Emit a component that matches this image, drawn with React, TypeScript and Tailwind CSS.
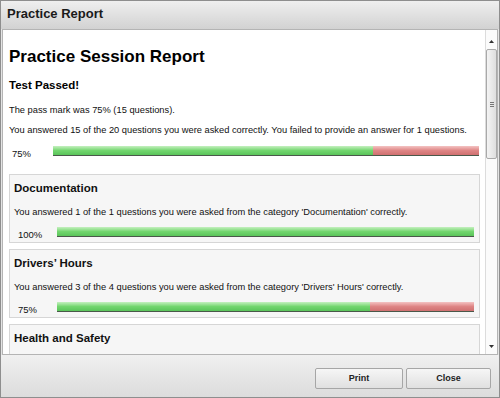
import React from "react";

interface Category {
  name: string;
  correct: number;
  asked: number;
}

const CATEGORIES: Category[] = [
  { name: "Documentation", correct: 1, asked: 1 },
  { name: "Drivers\u2019 Hours", correct: 3, asked: 4 },
];

const FONT = { fontFamily: '"Liberation Sans", Arial, sans-serif' };

function ScoreBar({ percent }: { percent: number }) {
  return (
    <div className="flex-1 h-[10px] mb-[3px] flex border-b border-[#4a584a]">
      <div
        className="h-full bg-gradient-to-b from-[#c4f0bf] via-[#72d66e] to-[#5ac45a]"
        style={{ width: `${percent}%` }}
      />
      {percent < 100 && (
        <div className="flex-1 h-full bg-gradient-to-b from-[#f3c3c3] via-[#de8585] to-[#cf7070]" />
      )}
    </div>
  );
}

function ScoreRow({ percent, labelClass }: { percent: number; labelClass: string }) {
  return (
    <div className="flex items-end">
      <div className={`text-[9.5px] leading-[10px] text-[#111] ${labelClass}`}>{percent}%</div>
      <ScoreBar percent={percent} />
    </div>
  );
}

function CategoryBox({ cat }: { cat: Category }) {
  const pct = Math.round((cat.correct / cat.asked) * 100);
  return (
    <div className="border border-[#d6d6d6] bg-[#f6f6f6] pl-[4px] pr-[5px] pt-[5px] pb-[2px]">
      <div className="text-[11.5px] leading-[16px] font-bold text-[#111]">{cat.name}</div>
      <div className="mt-[10px] text-[9.3px] leading-[12px] text-[#111]">
        You answered {cat.correct} of the {cat.asked} questions you were asked from the category '
        {cat.name.replace("\u2019", "'")}' correctly.
      </div>
      <div className="mt-[9px]">
        <ScoreRow percent={pct} labelClass="w-[43px] pl-[4px]" />
      </div>
    </div>
  );
}

function Scrollbar() {
  return (
    <div className="w-[12px] border-l border-[#dcdcdc] bg-[#fbfbfb] flex flex-col items-center">
      <div className="h-[19px] flex items-center justify-center pt-[4px]">
        <svg width="5" height="3" viewBox="0 0 5 3">
          <path d="M0 3 L2.5 0 L5 3 Z" fill="#333" />
        </svg>
      </div>
      <div className="w-[11px] h-[110px] rounded-[2px] border border-[#a9a9a9] bg-gradient-to-r from-[#f4f4f4] to-[#dedede] flex items-center justify-center">
        <div className="flex flex-col gap-[1px]">
          <div className="w-[4px] h-px bg-[#777]" />
          <div className="w-[4px] h-px bg-[#777]" />
          <div className="w-[4px] h-px bg-[#777]" />
        </div>
      </div>
      <div className="flex-1" />
      <div className="h-[14px] flex items-center justify-center pb-[2px]">
        <svg width="5" height="3" viewBox="0 0 5 3">
          <path d="M0 0 L2.5 3 L5 0 Z" fill="#333" />
        </svg>
      </div>
    </div>
  );
}

export default function App() {
  return (
    <div
      className="w-[500px] h-[398px] border border-[#8e8e8e] bg-[#e4e4e4] flex flex-col overflow-hidden"
      style={FONT}
    >
      {/* Title bar */}
      <div className="h-[28px] shrink-0 bg-gradient-to-b from-[#efefef] to-[#d2d2d2] pl-[6px] pt-[5px]">
        <div className="text-[13px] leading-[16px] font-bold text-[#1a1a1a]">Practice Report</div>
      </div>

      {/* Report area */}
      <div className="h-[326px] shrink-0 mx-[1px] border border-[#b4b4b4] bg-white flex">
        <div className="flex-1 overflow-hidden pl-[6px] pr-[5px] pt-[17px]">
          <div className="text-[17px] leading-[20px] font-bold text-black">Practice Session Report</div>
          <div className="mt-[10px] text-[11.5px] leading-[16px] font-bold text-black">Test Passed!</div>
          <div className="mt-[11px] text-[9.3px] leading-[12px] text-[#111]">
            The pass mark was 75% (15 questions).
          </div>
          <div className="mt-[8px] text-[9.3px] leading-[12px] text-[#111] whitespace-nowrap">
            You answered 15 of the 20 questions you were asked correctly. You failed to provide an answer for 1
            questions.
          </div>
          <div className="mt-[10px] pr-[1px]">
            <ScoreRow percent={75} labelClass="w-[44px] pl-[3px]" />
          </div>
          <div className="mt-[15px] flex flex-col gap-[6px]">
            {CATEGORIES.map((c) => (
              <CategoryBox key={c.name} cat={c} />
            ))}
            <div className="border border-[#d6d6d6] bg-[#f6f6f6] pl-[4px] pt-[5px] h-[60px]">
              <div className="text-[11.5px] leading-[16px] font-bold text-[#111]">Health and Safety</div>
            </div>
          </div>
        </div>
        <Scrollbar />
      </div>

      {/* Footer */}
      <div className="flex-1 bg-gradient-to-b from-[#f0f0f0] to-[#dcdcdc] flex justify-end items-start gap-[3px] pt-[13px] pr-[8px]">
        <button className="w-[88px] h-[21px] rounded-[2px] border border-[#a6a6a6] bg-gradient-to-b from-[#f6f6f6] to-[#e0e0e0] text-[9px] font-bold text-[#222]">
          Print
        </button>
        <button className="w-[85px] h-[21px] rounded-[2px] border border-[#a6a6a6] bg-gradient-to-b from-[#f6f6f6] to-[#e0e0e0] text-[9px] font-bold text-[#222]">
          Close
        </button>
      </div>
    </div>
  );
}
